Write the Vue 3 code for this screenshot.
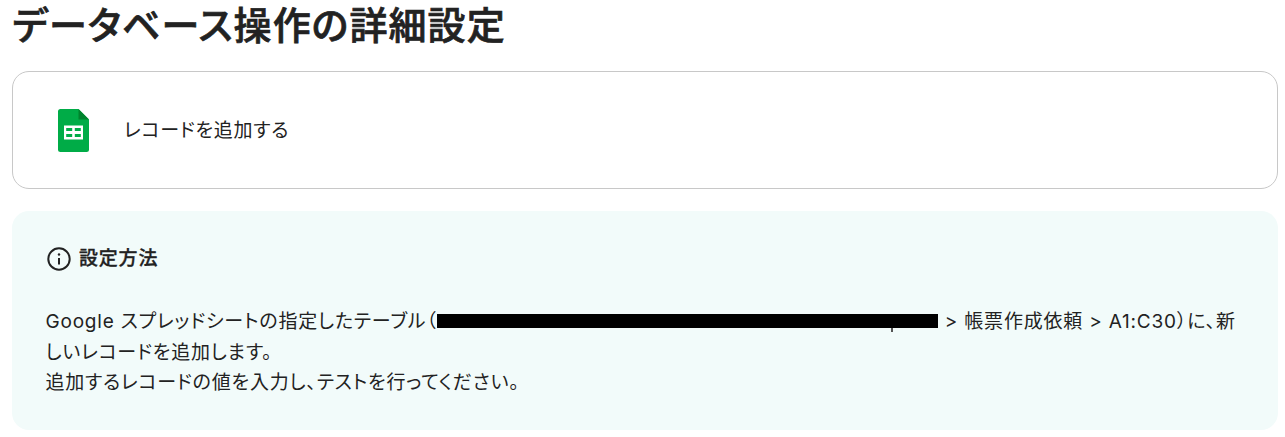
<script setup>
const title = 'データベース操作の詳細設定'
const action = 'レコードを追加する'
</script>

<template>
  <main class="page">
    <h1>{{ title }}</h1>

    <section class="action-card">
      <svg class="sheet-icon" viewBox="0 0 31 43">
        <path d="M2.500 0H20.500L31 10.500V40.500a2.500 2.500 0 0 1-2.500 2.500H2.500a2.500 2.500 0 0 1-2.500-2.500V2.500a2.500 2.500 0 0 1 2.500-2.500z" fill="#00ac47" />
        <path d="M20.500 0L31 10.500H20.500z" fill="#00832d" />
        <path d="M6 16.500H25V30.500H6zM8.200 19V22H14.200V19zM16.800 19V22H22.800V19zM8.200 25V28H14.200V25zM16.800 25V28H22.800V25z" fill="#fff" fill-rule="evenodd" />
      </svg>
      <span class="action-name">{{ action }}</span>
    </section>

    <section class="guide">
      <h2>
        <svg class="info-icon" viewBox="0 0 24 24">
          <circle cx="12" cy="12" r="10.700" fill="none" stroke="#222" stroke-width="2" />
          <path d="M12 11V17.500" stroke="#222" stroke-width="2" />
          <circle cx="12" cy="7.500" r="1.200" fill="#222" />
        </svg>
        <span>設定方法</span>
      </h2>
      <p>
        Google スプレッドシートの指定したテーブル（<span class="redacted"></span> &gt; 帳票作成依頼 &gt; A1:C30）に、新しいレコードを追加します。<br>
        追加するレコードの値を入力し、テストを行ってください。
      </p>
    </section>
  </main>
</template>

<style>
body {
  background: #fff;
}
</style>

<style scoped>
.page {
  box-sizing: border-box;
  height: 437px;
  padding: 0 7px 0 12px;
  overflow: hidden;
  color: #222;
  font-family: Inter, "Noto Sans CJK JP", sans-serif;
  font-feature-settings: "palt";
}

h1 {
  height: 71px;
  margin: 0;
  padding-left: 0.5px;
  font-size: 38px;
  font-weight: 500;
  line-height: 50px;
  letter-spacing: 1.08px;
  -webkit-text-stroke: 0.7px #222;
}

.action-card {
  box-sizing: border-box;
  display: flex;
  align-items: center;
  height: 118px;
  padding: 0 45px;
  border: 1px solid #c8c8c8;
  border-radius: 17px;
  font-size: 19px;
  letter-spacing: 0.75px;
}

.action-name {
  padding-bottom: 4px;
}

.sheet-icon {
  width: 31px;
  height: 43px;
  margin-right: 35px;
}

.guide {
  box-sizing: border-box;
  height: 219px;
  margin-top: 22px;
  padding: 33px 34px 33px 33.500px;
  border-radius: 17px;
  background: #f2fbfa;
}

h2 {
  display: flex;
  align-items: center;
  gap: 8px;
  height: 30px;
  margin: 0 0 33px 1.500px;
  font-size: 19px;
  font-weight: 500;
  letter-spacing: 0.8px;
  -webkit-text-stroke: 0.3px #222;
}

h2 span {
  padding-bottom: 5px;
}

.info-icon {
  width: 24px;
  height: 24px;
}

p {
  margin: 0;
  font-size: 19px;
  line-height: 30.5px;
  letter-spacing: 0.8px;
}

.redacted {
  position: relative;
  display: inline-block;
  width: 501px;
  height: 14px;
  margin-right: 1px;
  background: #000;
  vertical-align: 0;
}

/* descender peeking out below the bar */
.redacted::after {
  content: "";
  position: absolute;
  top: 14px;
  left: 454px;
  width: 2px;
  height: 4px;
  background: #555;
}
</style>
